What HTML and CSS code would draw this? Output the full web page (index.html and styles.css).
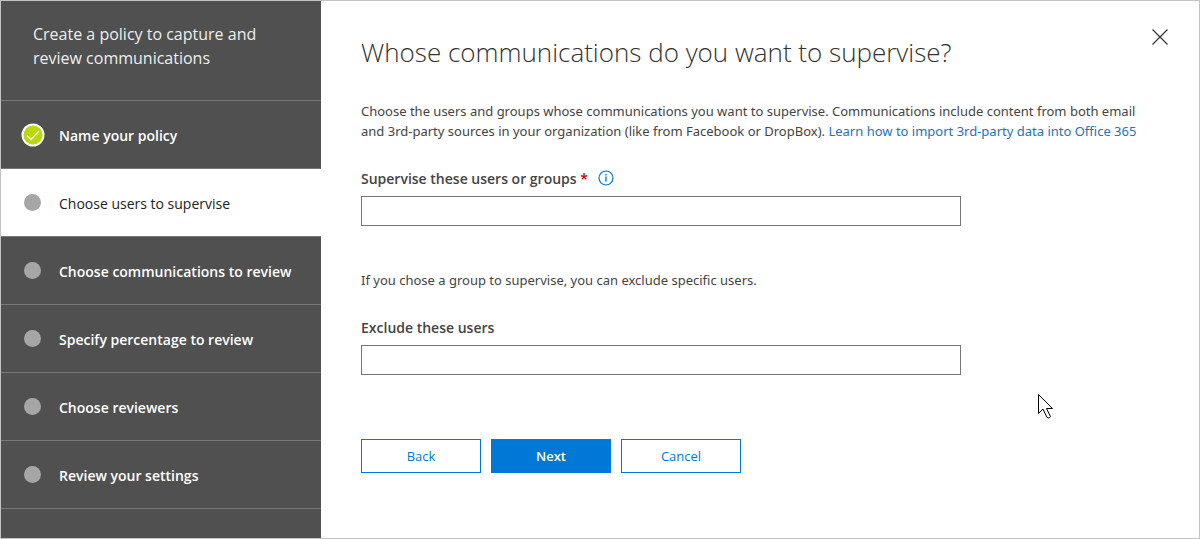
FILE: index.html
```html
<!DOCTYPE html>
<html lang="en">
<head>
  <meta charset="UTF-8">
  <meta name="viewport" content="width=device-width, initial-scale=1.0">
  <title>Supervision policy</title>
  <link rel="stylesheet" href="styles.css">
</head>
<body>
  <div class="wizard">
    <nav class="sidebar">
      <p class="sidebar-title">Create a policy to capture and review communications</p>
      <ol class="steps">
        <li class="step done">
          <svg class="check" viewBox="0 0 24 24" aria-hidden="true">
            <circle cx="12" cy="12" r="10.5" fill="#bad80a" stroke="#fff" stroke-width="2"/>
            <path d="M6 12.5l4 4 8-8.500" fill="none" stroke="#fff" stroke-width="1.300"/>
          </svg>
          <span>Name your policy</span>
        </li>
        <li class="step active"><i class="dot"></i><span>Choose users to supervise</span></li>
        <li class="step"><i class="dot"></i><span>Choose communications to review</span></li>
        <li class="step"><i class="dot"></i><span>Specify percentage to review</span></li>
        <li class="step"><i class="dot"></i><span>Choose reviewers</span></li>
        <li class="step"><i class="dot"></i><span>Review your settings</span></li>
      </ol>
    </nav>

    <main class="content">
      <header class="content-header">
        <h1>Whose communications do you want to supervise?</h1>
        <button type="button" class="close" aria-label="Close">
          <svg viewBox="0 0 16 16" width="16" height="16">
            <path d="M.5.500l15 15M15.500.500l-15 15" fill="none" stroke="#333" stroke-width="1.200"/>
          </svg>
        </button>
      </header>

      <p class="text">Choose the users and groups whose communications you want to supervise. Communications include content from both email and 3rd-party sources in your organization (like from Facebook or DropBox). <a href="#">Learn how to import 3rd-party data into Office 365</a></p>

      <form>
        <div class="field">
          <div class="label-row">
            <label for="users">Supervise these users or groups <span class="required">*</span></label>
            <svg class="info" viewBox="0 0 16 16" aria-hidden="true">
              <circle cx="8" cy="8" r="7" fill="none" stroke="#0078d7" stroke-width="1.200"/>
              <path d="M8 4v1.600M8 6.600v5" stroke="#0078d7" stroke-width="1.400"/>
            </svg>
          </div>
          <input type="text" id="users">
        </div>

        <p class="text">If you chose a group to supervise, you can exclude specific users.</p>

        <div class="field">
          <div class="label-row">
            <label for="exclude">Exclude these users</label>
          </div>
          <input type="text" id="exclude">
        </div>

        <div class="buttons">
          <button type="button" class="btn">Back</button>
          <button type="button" class="btn primary">Next</button>
          <button type="button" class="btn">Cancel</button>
        </div>
      </form>
    </main>

    <svg class="cursor" viewBox="0 0 16 26" aria-hidden="true">
      <path d="M.5.500v19l4.500-4.500 4 8.500q2 1.500 3.500-1l-4-8h6z" fill="#fff" stroke="#000"/>
    </svg>
  </div>
</body>
</html>
```

FILE: styles.css
```css
* {
  margin: 0;
  padding: 0;
  box-sizing: border-box;
}

body {
  font-family: "Open Sans", "Noto Sans", sans-serif;
  font-size: 13px;
  color: #444;
  background: #fff;
}

.wizard {
  position: relative;
  display: flex;
  min-height: 100vh;
  border: 1px solid #c3c3c3;
}

/* sidebar */
.sidebar {
  flex: 0 0 320px;
  background: #505050;
  color: #fff;
}

.sidebar-title {
  height: 100px;
  padding: 21px 32px;
  font-size: 16px;
  line-height: 24px;
  color: #eee;
  border-bottom: 1px solid #777;
}

.steps {
  list-style: none;
}

.step {
  display: flex;
  align-items: center;
  gap: 18px;
  height: 68px;
  padding: 0 20px;
  font-size: 14px;
  font-weight: 600;
  border-bottom: 1px solid #777;
}

.step span {
  padding-top: 2px;
}

.step.active {
  background: #fff;
  color: #222;
  font-weight: 400;
}

.check {
  width: 24px;
  height: 24px;
  margin-right: -4px;
}

.dot {
  width: 17px;
  height: 17px;
  margin-left: 3px;
  border-radius: 50%;
  background: #a6a6a6;
}

/* content */
.content {
  flex: 1;
  padding: 28px 31px 28px 40px;
}

.content-header {
  display: flex;
  justify-content: space-between;
  align-items: flex-start;
  margin-bottom: 26px;
}

h1 {
  font-size: 26px;
  font-weight: 300;
  line-height: 46px;
  color: #333;
}

.close {
  width: 16px;
  height: 16px;
  border: none;
  background: none;
  cursor: pointer;
}

.close svg {
  display: block;
}

.text {
  max-width: 800px;
  font-family: "Noto Sans", "Open Sans", sans-serif;
  line-height: 20px;
}

a {
  color: #2672b8;
  text-decoration: none;
}

.field {
  margin: 27px 0 44px;
}

.label-row {
  display: flex;
  align-items: center;
  gap: 10px;
  height: 20px;
  margin-bottom: 8px;
}

label {
  font-size: 14px;
  font-weight: 600;
}

.required {
  color: #b00020;
}

.info {
  width: 16px;
  height: 16px;
}

input[type="text"] {
  display: block;
  width: 100%;
  max-width: 600px;
  height: 30px;
  padding: 0 8px;
  font: inherit;
  border: 1px solid #767676;
}

.buttons {
  display: flex;
  gap: 10px;
  margin-top: 64px;
}

.btn {
  width: 120px;
  height: 34px;
  font: inherit;
  color: #0078d7;
  background: #fff;
  border: 1px solid #0078d7;
  cursor: pointer;
}

.btn.primary {
  color: #fff;
  font-weight: 600;
  background: #0078d7;
}

.cursor {
  position: absolute;
  left: 1037px;
  top: 393px;
  width: 16px;
  height: 26px;
}
```
